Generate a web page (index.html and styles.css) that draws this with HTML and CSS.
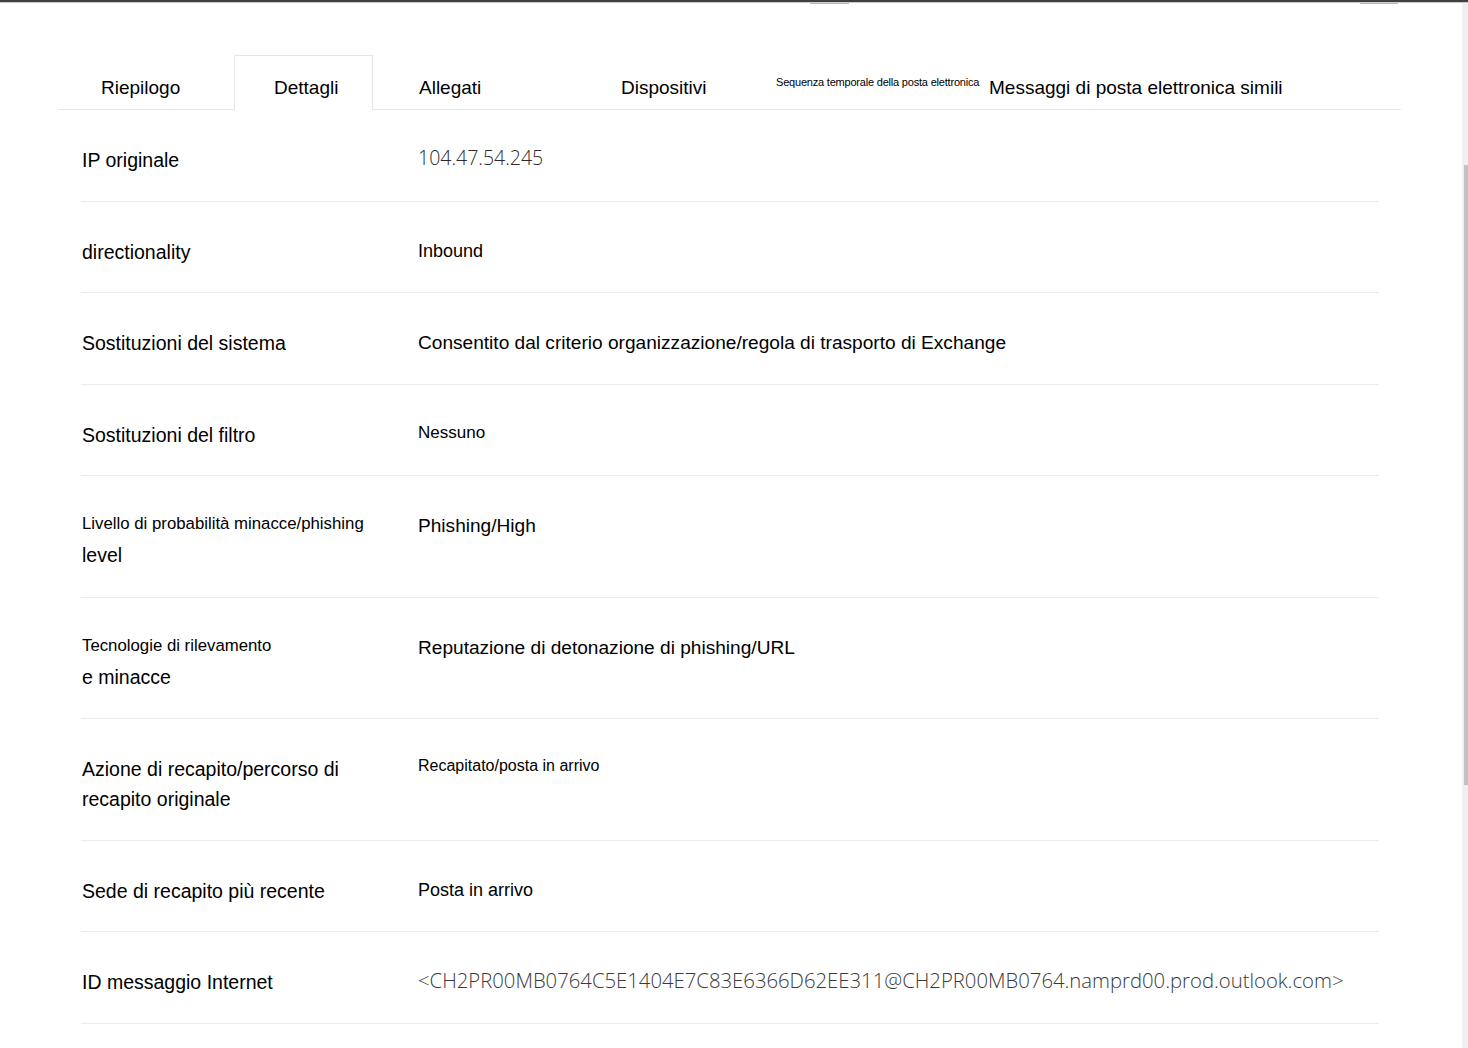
FILE: index.html
```html
<!DOCTYPE html>
<html lang="it">
<head>
<meta charset="utf-8">
<title>Dettagli</title>
<link rel="stylesheet" href="styles.css">
</head>
<body>
<div class="topbar"></div>
<div class="topline"></div>
<div class="page">
  <div class="content">
    <div class="marks"><span class="mark mark-a"></span><span class="mark mark-b"></span></div>
    <nav class="tabs">
      <div class="tab tab-1">Riepilogo</div>
      <div class="tab tab-2 active">Dettagli</div>
      <div class="tab tab-3">Allegati</div>
      <div class="tab tab-4">Dispositivi</div>
      <div class="tab tab-5 tiny">Sequenza temporale della posta elettronica</div>
      <div class="tab tab-6">Messaggi di posta elettronica simili</div>
    </nav>
    <div class="rows">
      <div class="row">
        <div class="label">IP originale</div>
        <div class="value light ip">104.47.54.245</div>
      </div>
      <div class="row">
        <div class="label">directionality</div>
        <div class="value v-md">Inbound</div>
      </div>
      <div class="row">
        <div class="label">Sostituzioni del sistema</div>
        <div class="value">Consentito dal criterio organizzazione/regola di trasporto di Exchange</div>
      </div>
      <div class="row">
        <div class="label">Sostituzioni del filtro</div>
        <div class="value v-sm v-17">Nessuno</div>
      </div>
      <div class="row">
        <div class="label"><span class="l-small">Livello di probabilità minacce/phishing</span><span class="l-big">level</span></div>
        <div class="value">Phishing/High</div>
      </div>
      <div class="row">
        <div class="label"><span class="l-small">Tecnologie di rilevamento</span><span class="l-big">e minacce</span></div>
        <div class="value">Reputazione di detonazione di phishing/URL</div>
      </div>
      <div class="row">
        <div class="label">Azione di recapito/percorso di<br>recapito originale</div>
        <div class="value v-sm">Recapitato/posta in arrivo</div>
      </div>
      <div class="row">
        <div class="label">Sede di recapito più recente</div>
        <div class="value v-md">Posta in arrivo</div>
      </div>
      <div class="row">
        <div class="label">ID messaggio Internet</div>
        <div class="value light msgid">&lt;CH2PR00MB0764C5E1404E7C83E6366D62EE311@CH2PR00MB0764.namprd00.prod.outlook.com&gt;</div>
      </div>
    </div>
  </div>
  <div class="scrollbar"><div class="thumb"></div></div>
</div>
</body>
</html>
```

FILE: styles.css
```css
html, body {
  margin: 0;
  padding: 0;
  background: #ffffff;
  overflow: hidden;
}

body {
  font-family: "Liberation Sans", Arial, sans-serif;
  color: #000000;
}

.topbar {
  height: 2px;
  background: #404040;
}

.topline {
  height: 1px;
  background: #c9c9c9;
}

.page {
  display: flex;
  height: 1045px;
}

.content {
  flex: 1;
  min-width: 0;
}

.marks {
  display: flex;
  height: 1px;
}

.mark {
  display: block;
  height: 1px;
  background: #e3a9b0;
}

.mark-a {
  margin-left: 810px;
  width: 39px;
}

.mark-b {
  margin-left: 511px;
  width: 38px;
}

.scrollbar {
  width: 6px;
  background: #f0f0f0;
  display: flex;
  justify-content: flex-end;
}

.thumb {
  width: 4px;
  height: 620px;
  margin-top: 162px;
  background: #c2c2c2;
}

/* tabs */
.tabs {
  display: flex;
  margin: 51px 0 0 59px;
  width: 1342px;
  height: 54px;
  border-bottom: 1px solid #e6e6e6;
  font-size: 19px;
}

.tab {
  box-sizing: border-box;
  height: 54px;
  padding-top: 22px;
  line-height: 22px;
  white-space: nowrap;
}

.tab-1 { width: 175px; padding-left: 42px; }
.tab-2 { width: 139px; padding-left: 39px; }
.tab-3 { width: 200px; padding-left: 46px; }
.tab-4 { width: 192px; padding-left: 48px; }
.tab-5 { width: 219px; padding-left: 11px; }
.tab-6 { padding-left: 5px; }

.tab.active {
  height: 55px;
  margin-bottom: -1px;
  border: 1px solid #e6e6e6;
  border-bottom: none;
  background: #ffffff;
  padding-top: 21px;
}

.tab.tiny {
  font-size: 11px;
  letter-spacing: -0.2px;
  padding-top: 20px;
  line-height: 14px;
}

/* rows */
.rows {
  margin-left: 81px;
  width: 1298px;
}

.row {
  display: grid;
  grid-template-columns: 337px 1fr;
  align-items: start;
  padding: 35px 0 25.5px;
  border-bottom: 1px solid #ebebeb;
}

.label {
  font-size: 19.5px;
  line-height: 30px;
  padding-left: 1px;
}

.l-small {
  display: block;
  font-size: 16.8px;
  line-height: 26px;
}

.l-big {
  display: block;
  line-height: 36px;
  margin-bottom: -2px;
}

.value {
  font-size: 19.1px;
  line-height: 30px;
  white-space: nowrap;
}

.v-md {
  font-size: 18px;
  line-height: 28px;
}

.v-sm {
  font-size: 16px;
  line-height: 24px;
}

.v-17 {
  font-size: 17px;
  line-height: 26px;
}

.light {
  font-family: "Open Sans", "Noto Sans", sans-serif;
  font-weight: 300;
  line-height: 26px;
}

.ip {
  font-size: 19.5px;
  color: #2b2b2b;
}

.msgid {
  font-size: 20.3px;
  color: #3a3a3a;
}
```
